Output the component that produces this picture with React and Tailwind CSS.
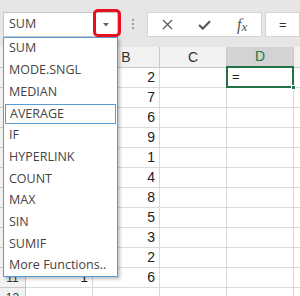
const functions = [
  'SUM',
  'MODE.SNGL',
  'MEDIAN',
  'AVERAGE',
  'IF',
  'HYPERLINK',
  'COUNT',
  'MAX',
  'SIN',
  'SUMIF',
  'More Functions..',
];

const colA = ['', '', '', '', '', '', '', '', '', '', '1', ''];
const colB = ['2', '7', '6', '9', '1', '4', '8', '5', '3', '2', '6', ''];

function Cell({ children, className = '' }) {
  return (
    <div
      className={`w-[67px] h-full shrink-0 border-r border-b border-[#dadada] flex items-center justify-end pr-[4px] ${className}`}
    >
      {children}
    </div>
  );
}

export default function App() {
  return (
    <div className="w-[300px] h-[296px] overflow-hidden relative bg-[#e6e6e6] font-['Liberation_Sans',sans-serif] text-[#222]">
      {/* Formula bar */}
      <div className="h-[47px] flex items-start pt-[12px]">
        <div className="ml-[3px] w-[115px] h-[25px] bg-white border border-[#c6c6c6] flex items-center pl-[5px] relative font-['Open_Sans',sans-serif] text-[12.5px] text-[#444]">
          SUM
          <svg className="absolute right-[8px] top-[10px]" width="6" height="4" viewBox="0 0 6 4">
            <path d="M0 0 L6 0 L3 3.5 Z" fill="#666" />
          </svg>
        </div>
        <div className="ml-[14px] mt-[7px] flex flex-col gap-[2px]">
          <div className="w-[2px] h-[2px] bg-[#9c9c9c]" />
          <div className="w-[2px] h-[2px] bg-[#9c9c9c]" />
          <div className="w-[2px] h-[2px] bg-[#9c9c9c]" />
        </div>
        <div className="ml-[13px] w-[115px] h-[25px] bg-white border border-[#d4d4d4] flex items-center">
          <div className="w-[38px] flex justify-center pl-[2px]">
            <svg width="11" height="11" viewBox="0 0 11 11">
              <path d="M1 1 L10 10 M10 1 L1 10" stroke="#5a5a5a" strokeWidth="1.3" />
            </svg>
          </div>
          <div className="w-[38px] flex justify-center">
            <svg width="13" height="10" viewBox="0 0 13 10">
              <path d="M1 5 L4.8 8.6 L12 1.2" stroke="#5a5a5a" strokeWidth="2.2" fill="none" />
            </svg>
          </div>
          <div className="w-[38px] flex justify-center items-end font-['Liberation_Serif',serif] italic text-[16px] text-[#555] leading-none">
            f<span className="text-[13px]">x</span>
          </div>
        </div>
        <div className="ml-[3px] flex-1 h-[25px] bg-white border border-[#d4d4d4] flex items-center pl-[13px] text-[13px] text-[#333]">
          =
        </div>
      </div>

      {/* Column headers */}
      <div className="h-[21px] flex bg-[#f2f2f2] text-[14px] text-[#333]">
        <div className="w-[26px] shrink-0 border-r border-b border-[#c8c8c8]" />
        <div className="w-[67px] shrink-0 border-r border-b border-[#c8c8c8] flex items-center justify-center">A</div>
        <div className="w-[67px] shrink-0 border-r border-b border-[#c8c8c8] flex items-center justify-center">B</div>
        <div className="w-[67px] shrink-0 border-r border-b border-[#c8c8c8] flex items-center justify-center">C</div>
        <div className="w-[67px] shrink-0 bg-[#d3d3d3] border-r border-b-2 border-r-[#c8c8c8] border-b-[#217346] flex items-center justify-center text-[#217346]">
          D
        </div>
        <div className="flex-1 border-b border-[#c8c8c8]" />
      </div>

      {/* Rows */}
      {colB.map((b, i) => (
        <div key={i} className="h-[20px] flex bg-white text-[14px]">
          <div className="w-[26px] shrink-0 bg-[#f2f2f2] border-r border-b border-[#c8c8c8] flex items-center justify-center text-[12px] text-[#333]">
            {i + 1}
          </div>
          <Cell>{colA[i]}</Cell>
          <Cell>{b}</Cell>
          <Cell />
          {i === 0 ? (
            <div className="w-[67px] h-full shrink-0 relative border-r border-b border-[#dadada]">
              <div className="absolute left-[-1px] top-[-2px] w-[68px] h-[22px] border-2 border-[#217346] flex items-center pl-[4px] text-[13px]">
                =
              </div>
              <div className="absolute right-[-3px] bottom-[-3px] w-[5px] h-[5px] bg-[#217346] border border-white" />
            </div>
          ) : (
            <Cell />
          )}
          <div className="flex-1 border-b border-[#dadada]" />
        </div>
      ))}

      {/* Function dropdown */}
      <div className="absolute left-[3px] top-[37px] w-[115px] h-[240px] bg-white border border-[#5b9bd5] shadow-[2px_2px_3px_rgba(0,0,0,0.25)] font-['Open_Sans',sans-serif] text-[12.5px] text-[#444] z-10">
        {functions.map((f) =>
          f === 'AVERAGE' ? (
            <div key={f} className="h-[21.7px] px-[1px] flex items-center">
              <div className="w-full h-[20px] border border-[#5b9bd5] flex items-center pl-[4px]">{f}</div>
            </div>
          ) : (
            <div key={f} className="h-[21.7px] flex items-center pl-[5px]">
              {f}
            </div>
          )
        )}
      </div>

      {/* Highlight around the name box arrow */}
      <div className="absolute left-[93px] top-[9px] w-[28px] h-[28px] border-[3px] border-[#e8101e] rounded-[5px] z-20" />
    </div>
  );
}
